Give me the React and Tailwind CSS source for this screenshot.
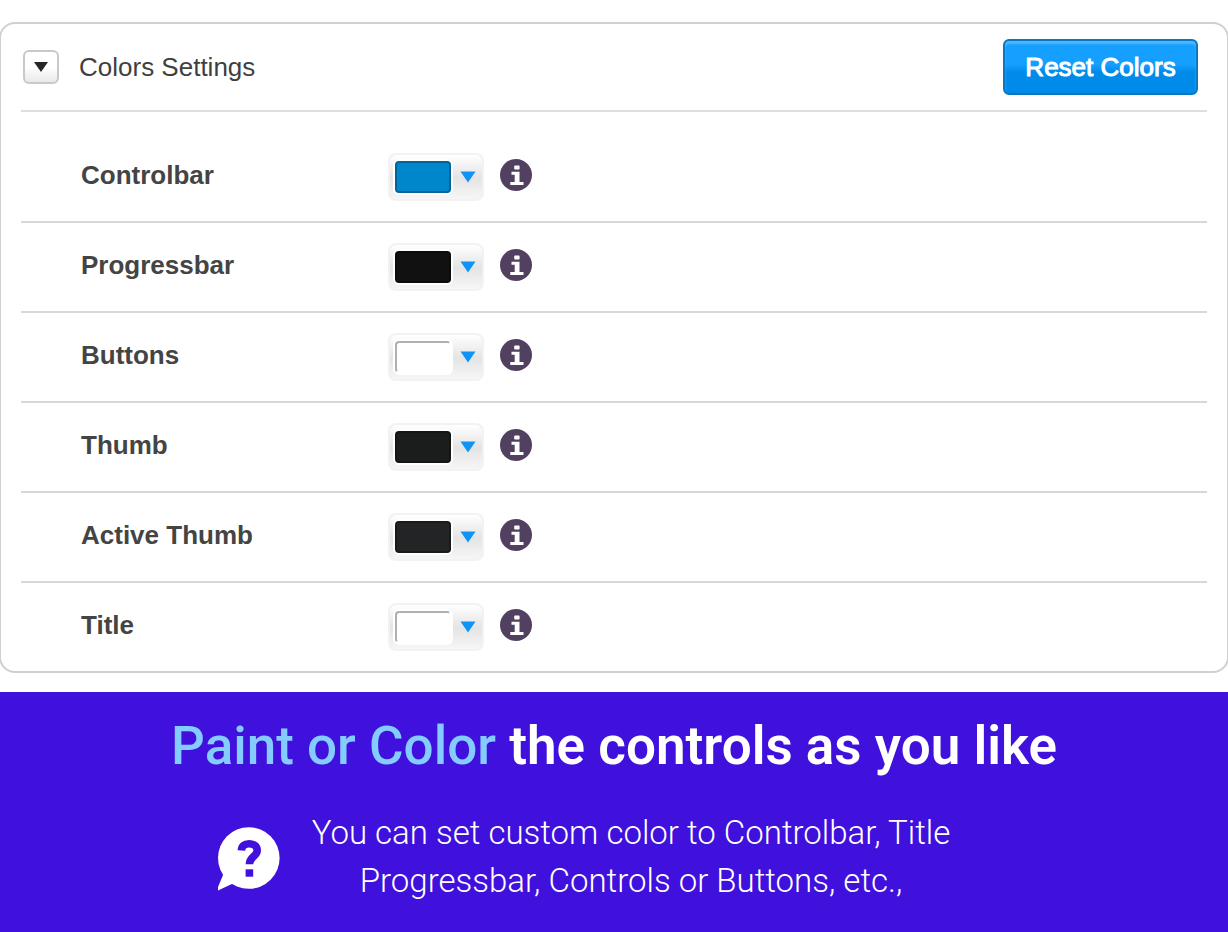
import { useState } from 'react';
import clsx from 'clsx';

const colorOptions = [
  { id: 'controlbar', label: 'Controlbar', color: '#0087cb' },
  { id: 'progressbar', label: 'Progressbar', color: '#111111' },
  { id: 'buttons', label: 'Buttons', color: '#ffffff' },
  { id: 'thumb', label: 'Thumb', color: '#1b1d1c' },
  { id: 'active-thumb', label: 'Active Thumb', color: '#222425' },
  { id: 'title', label: 'Title', color: '#ffffff' },
];

function InfoIcon() {
  return (
    <svg viewBox="0 0 32 32" className="w-8 h-8" aria-hidden="true">
      <circle cx="16" cy="16" r="16" fill="#524061" />
      <path d="M14.200 7.200q0-.8.8-.8h3.800q.8 0 .8.800v2.600q0 .8-.8.8h-3.800q-.8 0-.8-.8zM11.500 12.700h8v10.300h4v3h-13.200v-3h4.400v-7.300h-3.200z" fill="#fff" />
    </svg>
  );
}

function QuestionBubble() {
  return (
    <svg viewBox="0 0 62 64" className="w-[62px] h-16 mt-1 shrink-0" aria-hidden="true">
      <circle cx="30.8" cy="31" r="30.8" fill="#fff" />
      <path d="M5.500 47L0 60v3.500L16 56z" fill="#fff" />
      <path
        d="M23.400 23.500C23.600 19 26.500 16.800 31 16.800C36 16.800 39.200 19.300 39.200 23.500C39.200 29.500 31.400 29.500 31.400 37.300"
        fill="none"
        stroke="#4010dc"
        strokeWidth="7.600"
      />
      <path d="M27.600 42.300h7.600v7.400h-7.600z" fill="#4010dc" />
    </svg>
  );
}

function ColorPicker({ id, color }) {
  const isWhite = color === '#ffffff';

  return (
    <button
      id={id}
      type="button"
      className="flex items-center w-24 h-12 pl-[3px] gap-[7px] rounded-lg border-2 border-[#f2f2f2] bg-linear-to-b from-white via-[#e4e4e4] via-52% to-[#f6f6f6]"
    >
      <span className="rounded-md border-2 border-white bg-white">
        <span
          className={clsx(
            'block w-14 h-8 rounded-sm border-2',
            isWhite
              ? 'border-t-[#b0b0b0] border-l-[#b0b0b0] border-r-white border-b-white'
              : 'border-black/25'
          )}
          style={{ backgroundColor: color }}
        />
      </span>
      <svg viewBox="0 0 16 12" className="w-4 h-3" aria-hidden="true">
        <path d="M0.500 0.500h15L8 11.500z" fill="#0f93f5" />
      </svg>
    </button>
  );
}

function ColorRow({ option }) {
  return (
    <div className="flex items-center h-[90px] pl-15 pb-1 border-b-2 border-[#d8d8d8] last:border-b-0 last:h-[88px]">
      <label htmlFor={option.id} className="w-[307px] text-[26px] leading-8 font-bold text-[#444444]">
        {option.label}
      </label>
      <div className="pt-1 mr-4">
        <ColorPicker id={option.id} color={option.color} />
      </div>
      <button type="button" aria-label={`About ${option.label}`}>
        <InfoIcon />
      </button>
    </div>
  );
}

export default function App() {
  const [open, setOpen] = useState(true);

  return (
    <div className="min-h-screen flex flex-col bg-white overflow-hidden font-['Liberation_Sans',sans-serif]">
      <section className="mt-[22px] mb-[19px] -mx-px px-5 border-2 border-[#d0d0d0] rounded-2xl">
        <header className="flex items-center h-[88px] pl-[2px] pr-[9px] border-b-2 border-[#dedede]">
          <button
            type="button"
            aria-label="Toggle colors settings"
            aria-expanded={open}
            onClick={() => setOpen(!open)}
            className="flex items-center justify-center w-9 h-[34px] mr-5 rounded-md border-2 border-[#c9c9c9] bg-linear-to-b from-white from-50% to-[#e9e9e9]"
          >
            <svg viewBox="0 0 16 12" className="w-4 h-3" aria-hidden="true">
              <path d="M1 1h14L8 11z" fill="#262626" />
            </svg>
          </button>
          <h2 className="text-[26px] leading-8 text-[#3f3f3f]">Colors Settings</h2>
          <button
            type="button"
            className="ml-auto w-[195px] h-14 rounded-md border-2 border-[#0a77be] bg-linear-to-b from-[#159fff] from-45% to-[#008bea] to-60% shadow-[inset_0_3px_2px_#4db8ff] text-[26px] leading-8 text-white [-webkit-text-stroke:1px_white]"
          >
            Reset Colors
          </button>
        </header>

        {open && (
          <div className="pt-[21px]">
            {colorOptions.map((option) => (
              <ColorRow key={option.id} option={option} />
            ))}
          </div>
        )}
      </section>

      <section className="flex-1 pt-[22px] pb-5 bg-[#4010dc] text-white font-[Roboto,sans-serif]">
        <h1 className="text-center text-[53px] leading-16 font-semibold">
          <span className="font-medium text-[#84cbff]">Paint or Color</span> the controls as you like
        </h1>
        <div className="flex items-center justify-center gap-8 mt-[31px] pr-15">
          <QuestionBubble />
          <p className="text-center text-[33px] leading-12 font-light">
            You can set custom color to Controlbar, Title
            <br />
            Progressbar, Controls or Buttons, etc.,
          </p>
        </div>
      </section>
    </div>
  );
}
